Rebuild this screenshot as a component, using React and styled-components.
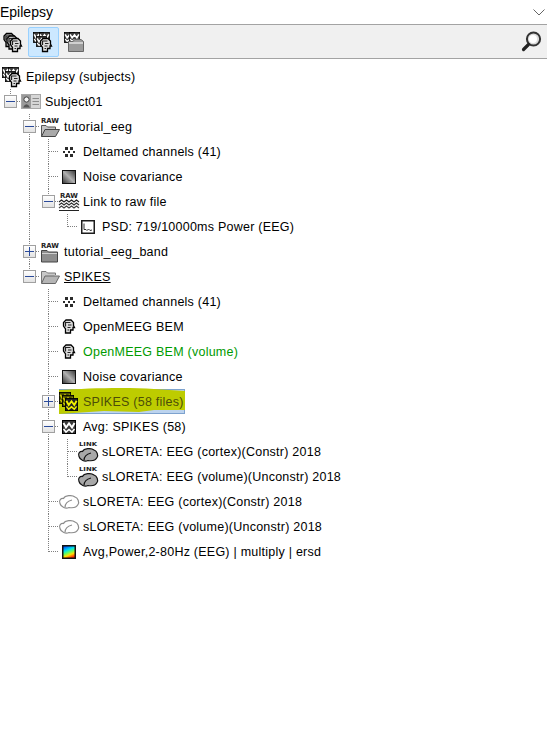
import React from "react";
import styled, { createGlobalStyle } from "styled-components";
import { Fragment } from "react";

const GlobalStyle = createGlobalStyle`
  html, body {
    margin: 0;
    background: #fff;
  }
  body {
    font-family: "Liberation Sans", Arial, sans-serif;
    color: #000;
  }
`;

const Wrapper = styled.div`
  width: 547px;
  height: 756px;
  overflow: hidden;
`;

const TitleBar = styled.div`
  height: 24px;
  display: flex;
  align-items: center;
  justify-content: space-between;
  padding-right: 2px;
  border-bottom: 1px solid #a3a3a3;
  font-size: 14px;
`;

const Toolbar = styled.div`
  height: 33px;
  display: flex;
  align-items: center;
  justify-content: space-between;
  background: #f0f0f0;
  border-bottom: 1px solid #a3a3a3;
  padding-right: 5px;
`;

const ToolGroup = styled.div`
  display: flex;
  align-items: center;
`;

const ToolButton = styled.div`
  box-sizing: border-box;
  width: ${(p) => p.$width}px;
  height: 30px;
  display: flex;
  align-items: center;
  padding-left: ${(p) => p.$pad}px;
  border-radius: 2px;
  border: 1px solid ${(p) => (p.$active ? "#99d1ff" : "transparent")};
  background: ${(p) => (p.$active ? "#cce8ff" : "transparent")};
`;

const Tree = styled.div`
  padding: 5px 0 0 1px;
`;

const Row = styled.div`
  position: relative;
  height: 25px;
  display: flex;
  align-items: stretch;
`;

const GuideCell = styled.div`
  position: relative;
  width: 19px;
  flex: none;

  &::before {
    content: "";
    position: absolute;
    left: 9px;
    top: 0;
    height: ${(p) => (p.$to === "bottom" ? "auto" : "13px")};
    bottom: ${(p) => (p.$to === "bottom" ? "0" : "auto")};
    border-left: 1px dotted ${(p) => (p.$show ? "#808080" : "transparent")};
  }

  &::after {
    content: "";
    position: absolute;
    left: 10px;
    right: 0;
    top: 12px;
    border-top: 1px dotted ${(p) => (p.$branch ? "#808080" : "transparent")};
  }
`;

const Expander = styled.div`
  position: absolute;
  z-index: 1;
  left: 3px;
  top: 6px;
  box-sizing: border-box;
  width: 13px;
  height: 13px;
  border: 1px solid #a0a0a0;
  background: linear-gradient(#fff, #e2e2e2);

  &::before {
    content: "";
    position: absolute;
    left: 1px;
    right: 1px;
    top: 5px;
    border-top: 1px solid #2a4a9a;
  }

  &::after {
    content: "";
    position: absolute;
    top: 1px;
    bottom: 1px;
    left: 5px;
    border-left: 1px solid ${(p) => (p.$open ? "transparent" : "#2a4a9a")};
  }
`;

const IconCell = styled.div`
  box-sizing: border-box;
  width: 20px;
  padding-left: 2px;
  flex: none;
  display: flex;
  align-items: center;
  justify-content: center;
  position: relative;
`;

const Label = styled.span`
  position: relative;
  margin-left: 5px;
  align-self: center;
  font-size: 12.5px;
  letter-spacing: 0.24px;
  white-space: nowrap;
  color: ${(p) => p.$color || "#000"};
  text-decoration: ${(p) => (p.$underline ? "underline" : "none")};
`;

const Highlight = styled.svg`
  position: absolute;
  left: 58px;
  top: 0;
  overflow: visible;
`;

const Pixel = styled.svg`
  display: block;
  flex: none;
  overflow: visible;
`;

/* little pixel style icons */
const WaveSquare = ({ x = 0, y = 0, s = 14, fill = "#3a3a3a", stroke = "#fff" }) => (
  <g transform={`translate(${x} ${y}) scale(${s / 14})`}>
    <rect x="0.5" y="0.5" width="13" height="13" fill={fill} stroke="#000" />
    <path d="M1.5 3 L4 7.5 L7 3.5 L10 7.5 L12.5 3" fill="none" stroke={stroke} strokeWidth="2" />
    <path d="M1.5 9 L4 12 L7 9.5 L10 12 L12.5 9" fill="none" stroke={stroke} strokeWidth="1.6" />
  </g>
);

const Head = ({ x = 0, y = 0, fill = "#dcdcdc" }) => (
  <g transform={`translate(${x} ${y})`}>
    <path
      d="M3 0.5 H8 L10.5 3 V6 L11.5 8 H10 V10.5 H7.5 V13.5 H2.5 V9.5 L0.5 6.5 V3 Z"
      fill={fill}
      stroke="#000"
      strokeWidth="1.3"
    />
    <path d="M2.5 7 V3 H7.5 M5 5.5 H8.5 M4.5 8 H7.5 M4.5 10.5 H6" stroke="#222" strokeWidth="1.2" fill="none" />
  </g>
);

const SubjectsIcon = () => (
  <Pixel width="20" height="20" viewBox="0 0 20 20">
    <Head x={0.5} y={1} fill="#a0a0a0" />
    <Head x={3.5} y={3.5} fill="#c0c0c0" />
    <Head x={7} y={6} />
  </Pixel>
);

const StudySubjectIcon = () => (
  <Pixel width="20" height="20" viewBox="0 0 20 20">
    <WaveSquare x={0} y={0} s={11} />
    <WaveSquare x={6} y={0} s={11} />
    <WaveSquare x={3} y={4} s={11} />
    <Head x={7} y={6} />
  </Pixel>
);

const StudyFolderIcon = () => (
  <Pixel width="20" height="20" viewBox="0 0 20 20">
    <WaveSquare x={0} y={0} s={11} />
    <WaveSquare x={5} y={0} s={11} />
    <path d="M4.5 9.5 H9 L10.5 7.5 H17 L19.5 9.5 V19.5 H4.5 Z" fill="#9c9c9c" stroke="#666" />
    <rect x="5" y="10" width="14" height="2" fill="#d0d0d0" />
  </Pixel>
);

const SearchIcon = () => (
  <Pixel width="22" height="22" viewBox="0 0 22 22">
    <circle cx="13.5" cy="8" r="6.6" fill="#dcdcdc" stroke="#333" strokeWidth="2" />
    <circle cx="13" cy="8" r="4" fill="#fff" />
    <path d="M8.5 13.5 L3.5 18.5" stroke="#222" strokeWidth="3.2" strokeLinecap="round" />
  </Pixel>
);

const Chevron = () => (
  <Pixel width="12" height="7" viewBox="0 0 12 7">
    <path d="M0.5 0.5 L6 6 L11.5 0.5" fill="none" stroke="#666" />
  </Pixel>
);

const SubjectCard = () => (
  <Pixel width="20" height="15" viewBox="0 0 20 15">
    <rect x="0.5" y="0.5" width="19" height="14" fill="#d6d6d6" stroke="#a8a8a8" />
    <rect x="1" y="1" width="9" height="13" fill="#9a9a9a" />
    <circle cx="5.5" cy="5.5" r="2.6" fill="#f4f4f4" stroke="#444" />
    <path d="M2 13.5 Q5.5 7 9 13.5 Z" fill="#555" />
    <path d="M11.5 4.5 H18 M11.5 7.5 H18 M11.5 10.5 H18" stroke="#8c8c8c" />
  </Pixel>
);

const Tag = ({ children, y = 6, len = 18, size = 7 }) => (
  <text
    x="1"
    y={y}
    fontFamily="DejaVu Sans, sans-serif"
    fontWeight="700"
    fontSize={size}
    textLength={len}
    lengthAdjust="spacingAndGlyphs"
    fill="#222"
  >
    {children}
  </text>
);

const RawFolderOpen = () => (
  <Pixel width="20" height="20" viewBox="0 0 20 20">
    <Tag>RAW</Tag>
    <path d="M1.5 19.5 V8.5 H6 L7.5 10 H15.5 V12" fill="#c4c4c4" stroke="#555" />
    <path d="M1.5 19.5 L5 12.5 H19.5 L15.5 19.5 Z" fill="#a9a9a9" stroke="#444" />
  </Pixel>
);

const RawFolderClosed = () => (
  <Pixel width="20" height="20" viewBox="0 0 20 20">
    <Tag>RAW</Tag>
    <path d="M1.5 20 V8.5 H7 L8.5 10 H17.5 V20 Z" fill="#8e8e8e" stroke="#444" />
    <rect x="2" y="11" width="15" height="1" fill="#d0d0d0" />
  </Pixel>
);

const OpenFolder = () => (
  <Pixel width="20" height="16" viewBox="0 0 20 16">
    <path d="M1.5 14 V2.5 H6 L7.5 4 H15.5 V6" fill="#c8c8c8" stroke="#777" />
    <path d="M1.5 14.5 L5 7 H19.5 L15.5 14.5 Z" fill="#b5b5b5" stroke="#666" />
  </Pixel>
);

const ChannelsIcon = () => (
  <Pixel width="14" height="10" viewBox="0 0 14 10">
    <g fill="#2c2c2c">
      <rect x="3" y="0" width="3" height="3" />
      <rect x="8" y="0" width="3" height="3" />
      <rect x="1" y="4" width="2" height="2" />
      <rect x="6" y="4" width="2" height="2" />
      <rect x="11" y="4" width="2" height="2" />
      <rect x="3" y="7" width="3" height="3" />
      <rect x="8" y="7" width="3" height="3" />
    </g>
  </Pixel>
);

const NoiseIcon = () => (
  <Pixel width="14" height="14" viewBox="0 0 14 14">
    <defs>
      <linearGradient id="noiseFill" x1="1" y1="0" x2="0" y2="1">
        <stop offset="0" stopColor="#333" />
        <stop offset="0.5" stopColor="#b0b0b0" />
        <stop offset="1" stopColor="#333" />
      </linearGradient>
    </defs>
    <rect x="0.5" y="0.5" width="13" height="13" fill="url(#noiseFill)" stroke="#111" />
  </Pixel>
);

const RawLinkIcon = () => (
  <Pixel width="20" height="20" viewBox="0 0 20 20">
    <Tag y={6}>RAW</Tag>
    <path d="M0 10 L2.5 8 L5 10 L7.5 8 L10 10 L12.5 8 L15 10 L17.5 8 L20 10" fill="none" stroke="#222" strokeWidth="1.2" />
    <path d="M0 13 L2.5 11 L5 13 L7.5 11 L10 13 L12.5 11 L15 13 L17.5 11 L20 13" fill="none" stroke="#333" strokeWidth="1.2" />
    <path d="M0 16 L2.5 14 L5 16 L7.5 14 L10 16 L12.5 14 L15 16 L17.5 14 L20 16" fill="none" stroke="#444" strokeWidth="1.2" />
    <path d="M0 18.5 H20" stroke="#222" />
  </Pixel>
);

const PsdIcon = () => (
  <Pixel width="14" height="14" viewBox="0 0 14 14">
    <rect x="0.75" y="0.75" width="12.5" height="12.5" fill="#fff" stroke="#1c1c1c" strokeWidth="1.5" />
    <path d="M3 3.5 V9.5 H5 L6 10.5 L7.5 9 L9 10.5 L11 10" fill="none" stroke="#333" />
  </Pixel>
);

const HeadIcon = () => (
  <Pixel width="14" height="15" viewBox="0 0 14 15">
    <Head x={1} y={0.5} />
  </Pixel>
);

const SpikesIcon = () => (
  <Pixel width="20" height="20" viewBox="0 0 20 20">
    <WaveSquare x={0} y={0} s={12} fill="#4d4d00" stroke="#c8c800" />
    <WaveSquare x={3} y={3} s={12} fill="#4d4d00" stroke="#c8c800" />
    <WaveSquare x={6} y={6} s={13} fill="#222" stroke="#f0f000" />
  </Pixel>
);

const AvgIcon = () => (
  <Pixel width="14" height="14" viewBox="0 0 14 14">
    <WaveSquare />
  </Pixel>
);

const brainPath = "M1 8.5 C-0.5 5.5 2 3 4.5 3.5 C6 0.5 13 -0.5 16 2 C19 3 20.5 7 19 9.5 C17.5 12.5 13 13 10 12.5 C7 14 2 12.5 1 8.5 Z";
const brainFold = "M6 12.5 C6 8.5 9 6 13 5";

const LinkBrain = () => (
  <Pixel width="20" height="20" viewBox="0 0 20 20" style={{ marginTop: "-2px" }}>
    <Tag y={5} size={5.5}>
      LINK
    </Tag>
    <g transform="translate(0 7)">
      <path d={brainPath} fill="#a8a8a8" stroke="#111" strokeWidth="1.2" />
      <path d={brainFold} fill="none" stroke="#111" strokeWidth="1.2" />
    </g>
  </Pixel>
);

const OutlineBrain = () => (
  <Pixel width="20" height="14" viewBox="0 0 20 14">
    <path d={brainPath} fill="#fff" stroke="#8c8c8c" strokeWidth="1.2" />
    <path d={brainFold} fill="none" stroke="#8c8c8c" strokeWidth="1.2" />
  </Pixel>
);

const TimeFreqIcon = () => (
  <Pixel width="14" height="14" viewBox="0 0 14 14">
    <defs>
      <linearGradient id="tfFill" x1="0.2" y1="0" x2="0.6" y2="1">
        <stop offset="0" stopColor="#0040ff" />
        <stop offset="0.35" stopColor="#00e0f0" />
        <stop offset="0.55" stopColor="#60ff60" />
        <stop offset="0.75" stopColor="#ffe000" />
        <stop offset="1" stopColor="#ff2000" />
      </linearGradient>
    </defs>
    <rect x="0.75" y="0.75" width="12.5" height="12.5" fill="url(#tfFill)" stroke="#111" strokeWidth="1.5" />
  </Pixel>
);

const tree = {
  label: "Epilepsy (subjects)",
  icon: <StudySubjectIcon />,
  children: [
    {
      label: "Subject01",
      icon: <SubjectCard />,
      children: [
        {
          label: "tutorial_eeg",
          icon: <RawFolderOpen />,
          children: [
            { label: "Deltamed channels (41)", icon: <ChannelsIcon /> },
            { label: "Noise covariance", icon: <NoiseIcon /> },
            {
              label: "Link to raw file",
              icon: <RawLinkIcon />,
              children: [{ label: "PSD: 719/10000ms Power (EEG)", icon: <PsdIcon /> }],
            },
          ],
        },
        { label: "tutorial_eeg_band", icon: <RawFolderClosed />, closed: true },
        {
          label: "SPIKES",
          icon: <OpenFolder />,
          underline: true,
          children: [
            { label: "Deltamed channels (41)", icon: <ChannelsIcon /> },
            { label: "OpenMEEG BEM", icon: <HeadIcon /> },
            { label: "OpenMEEG BEM (volume)", icon: <HeadIcon />, color: "#009a00" },
            { label: "Noise covariance", icon: <NoiseIcon /> },
            { label: "SPIKES (58 files)", icon: <SpikesIcon />, closed: true, selected: true, color: "#4c4e08" },
            {
              label: "Avg: SPIKES (58)",
              icon: <AvgIcon />,
              children: [
                { label: "sLORETA: EEG (cortex)(Constr) 2018", icon: <LinkBrain /> },
                { label: "sLORETA: EEG (volume)(Unconstr) 2018", icon: <LinkBrain /> },
              ],
            },
            { label: "sLORETA: EEG (cortex)(Constr) 2018", icon: <OutlineBrain /> },
            { label: "sLORETA: EEG (volume)(Unconstr) 2018", icon: <OutlineBrain /> },
            { label: "Avg,Power,2-80Hz (EEG) | multiply | ersd", icon: <TimeFreqIcon /> },
          ],
        },
      ],
    },
  ],
};

// walk the tree and keep, for every row, which ancestors still have siblings below
function flatten(node, parents = [], isLast = true, out = []) {
  out.push({ ...node, parents, isLast });
  const kids = node.children || [];
  kids.forEach((kid, i) => {
    const next = node === tree ? [] : [...parents, !isLast];
    flatten(kid, next, i === kids.length - 1, out);
  });
  return out;
}

const rows = flatten(tree);

function TreeRow({ row }) {
  const isRoot = row.label === tree.label;
  const hasBox = row.closed || row.children;
  return (
    <Row>
      {row.selected && (
        <Highlight width="126" height="25" viewBox="0 0 126 25">
          <rect x="0.5" y="0.5" width="125" height="24" fill="#bcd3ee" stroke="#7da2ce" />
          <path d="M0 1 C30 -1 70 -2 95 0 L126 2 V21 L95 21 L80 23 L45 22 L0 25 Z" fill="#bdcc00" />
        </Highlight>
      )}
      {row.parents.map((open, i) => (
        <GuideCell key={i} $show={open} $to="bottom" />
      ))}
      {!isRoot && (
        <GuideCell $show $to={row.isLast ? "mid" : "bottom"} $branch>
          {hasBox && <Expander $open={!row.closed} />}
        </GuideCell>
      )}
      <IconCell>{row.icon}</IconCell>
      <Label $color={row.color} $underline={row.underline}>
        {row.label}
      </Label>
    </Row>
  );
}

export default function App() {
  return (
    <Fragment>
      <GlobalStyle />
      <Wrapper>
        <TitleBar>
          <span>Epilepsy</span>
          <Chevron />
        </TitleBar>
        <Toolbar>
          <ToolGroup>
            <ToolButton $width={28} $pad={2}>
              <SubjectsIcon />
            </ToolButton>
            <ToolButton $width={31} $pad={4} $active>
              <StudySubjectIcon />
            </ToolButton>
            <ToolButton $width={30} $pad={4}>
              <StudyFolderIcon />
            </ToolButton>
          </ToolGroup>
          <SearchIcon />
        </Toolbar>
        <Tree>
          {rows.map((row, i) => (
            <TreeRow key={i} row={row} />
          ))}
        </Tree>
      </Wrapper>
    </Fragment>
  );
}
